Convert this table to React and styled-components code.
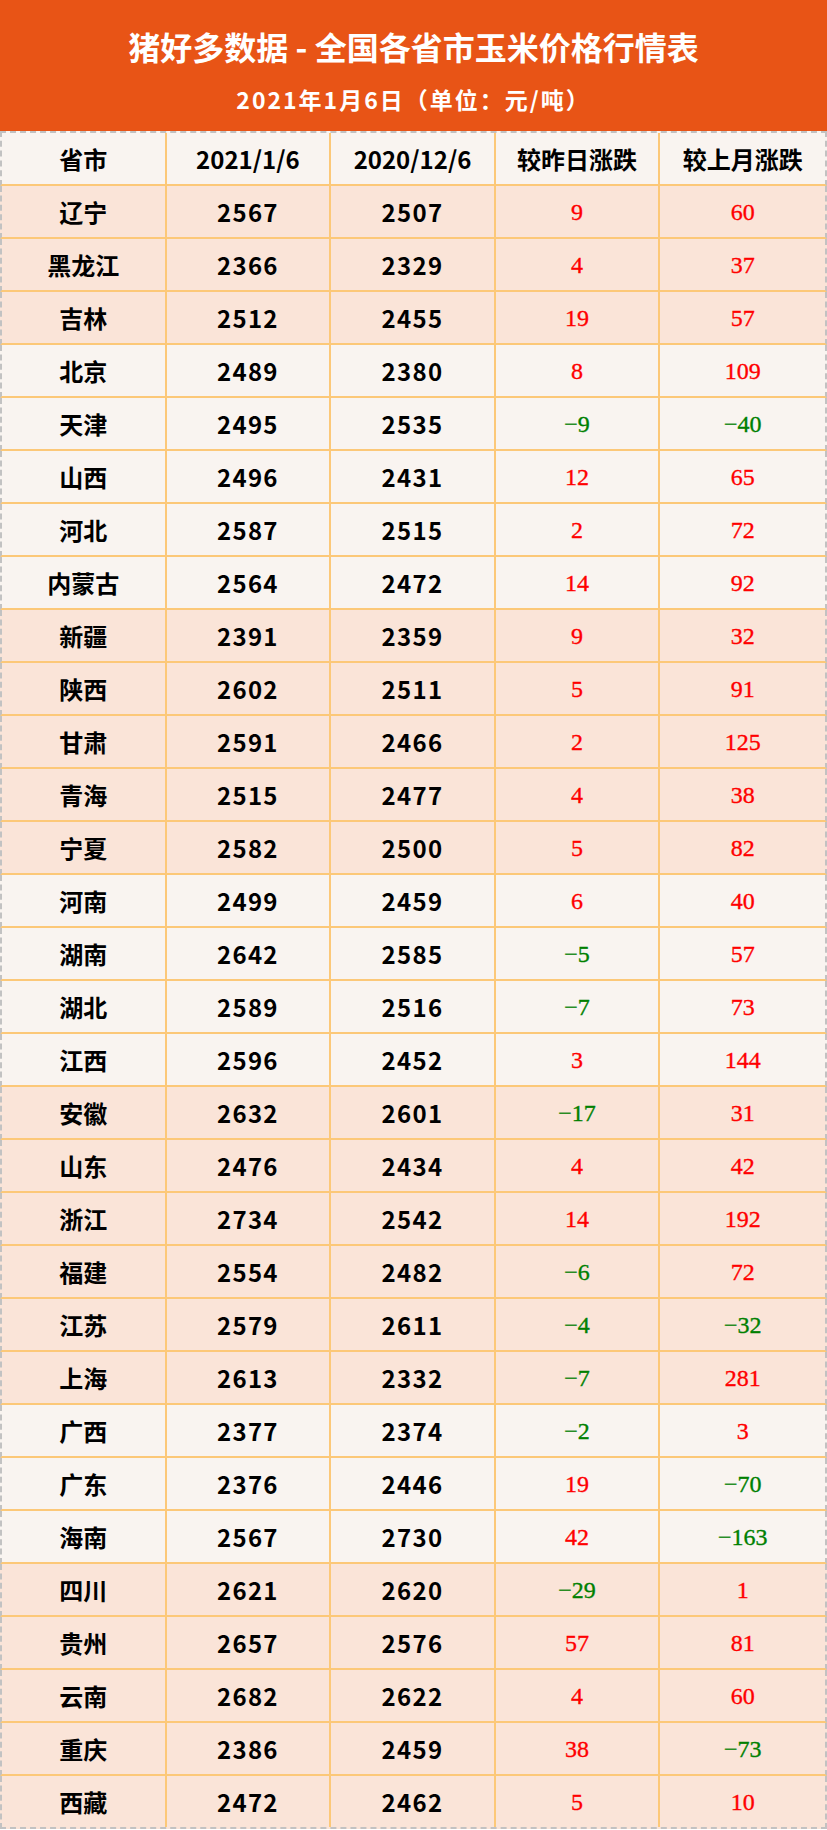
import React from "react";
import styled, { createGlobalStyle } from "styled-components";

const GlobalStyle = createGlobalStyle`
  html, body { margin: 0; padding: 0; background: #ffffff; }
  body { font-family: "Noto Sans CJK SC", "Noto Sans", sans-serif; }
  * { box-sizing: border-box; }
`;

const Page = styled.div`
  width: 827px;
  display: flex;
  flex-direction: column;
`;

const Banner = styled.header`
  height: 131px;
  background: #e85416;
  color: #ffffff;
  display: flex;
  flex-direction: column;
  align-items: center;
  padding-top: 27px;
  gap: 19px;
  font-family: "Noto Sans CJK SC", sans-serif;
  font-weight: 700;
`;

const Title = styled.h1`
  margin: 0;
  font-size: 32px;
  line-height: 38px;
  font-weight: 700;
`;

const Subtitle = styled.div`
  font-size: 23px;
  line-height: 30px;
  letter-spacing: 2px;
`;

const Table = styled.div`
  display: flex;
  flex-direction: column;
`;

const tones = {
  light: "#f9f4f0",
  pink: "#fae4d8",
};

const Row = styled.div`
  display: grid;
  grid-template-columns: repeat(5, 1fr);
  background: ${(p) => tones[p.$tone]};
  border-left: 2px dashed #c2c2c2;
  border-right: 2px dashed #c2c2c2;
  border-top: ${(p) => (p.$first ? "2px dashed #c2c2c2" : "none")};
  border-bottom: ${(p) => (p.$last ? "2px dashed #c2c2c2" : "2px solid #fcc878")};
`;

const Cell = styled.div`
  height: 51px;
  display: flex;
  align-items: center;
  justify-content: center;
  border-right: 2px solid #fcc878;
  &:last-child { border-right: none; }
  font-family: "Noto Sans CJK SC", sans-serif;
  font-weight: 700;
  font-size: 24px;
  color: #000000;
  letter-spacing: ${(p) => (p.$num ? "1.3px" : "0")};
`;

const Change = styled.span`
  font-family: "Liberation Serif", "Times New Roman", serif;
  font-size: 24px;
  font-weight: 400;
  padding-top: 2px;
  color: ${(p) => (p.$down ? "#008000" : "#ff0000")};
  -webkit-text-stroke: 0.35px ${(p) => (p.$down ? "#008000" : "#ff0000")};
`;

const rows = [
  ["辽宁", 2567, 2507, 9, 60, "pink"],
  ["黑龙江", 2366, 2329, 4, 37, "pink"],
  ["吉林", 2512, 2455, 19, 57, "pink"],
  ["北京", 2489, 2380, 8, 109, "light"],
  ["天津", 2495, 2535, -9, -40, "light"],
  ["山西", 2496, 2431, 12, 65, "light"],
  ["河北", 2587, 2515, 2, 72, "light"],
  ["内蒙古", 2564, 2472, 14, 92, "light"],
  ["新疆", 2391, 2359, 9, 32, "pink"],
  ["陕西", 2602, 2511, 5, 91, "pink"],
  ["甘肃", 2591, 2466, 2, 125, "pink"],
  ["青海", 2515, 2477, 4, 38, "pink"],
  ["宁夏", 2582, 2500, 5, 82, "pink"],
  ["河南", 2499, 2459, 6, 40, "light"],
  ["湖南", 2642, 2585, -5, 57, "light"],
  ["湖北", 2589, 2516, -7, 73, "light"],
  ["江西", 2596, 2452, 3, 144, "light"],
  ["安徽", 2632, 2601, -17, 31, "pink"],
  ["山东", 2476, 2434, 4, 42, "pink"],
  ["浙江", 2734, 2542, 14, 192, "pink"],
  ["福建", 2554, 2482, -6, 72, "pink"],
  ["江苏", 2579, 2611, -4, -32, "pink"],
  ["上海", 2613, 2332, -7, 281, "pink"],
  ["广西", 2377, 2374, -2, 3, "light"],
  ["广东", 2376, 2446, 19, -70, "light"],
  ["海南", 2567, 2730, 42, -163, "light"],
  ["四川", 2621, 2620, -29, 1, "pink"],
  ["贵州", 2657, 2576, 57, 81, "pink"],
  ["云南", 2682, 2622, 4, 60, "pink"],
  ["重庆", 2386, 2459, 38, -73, "pink"],
  ["西藏", 2472, 2462, 5, 10, "pink"],
];

const fmt = (n) => (n < 0 ? "\u2212" + Math.abs(n) : String(n));

export default function App() {
  return (
    <Page>
      <GlobalStyle />
      <Banner>
        <Title>猪好多数据 - 全国各省市玉米价格行情表</Title>
        <Subtitle>2021年1月6日（单位：元/吨）</Subtitle>
      </Banner>
      <Table>
        <Row $tone="light" $first>
          <Cell>省市</Cell>
          <Cell>2021/1/6</Cell>
          <Cell>2020/12/6</Cell>
          <Cell>较昨日涨跌</Cell>
          <Cell>较上月涨跌</Cell>
        </Row>
        {rows.map(([name, a, b, d, m, tone], i) => (
          <Row key={name} $tone={tone} $last={i === rows.length - 1}>
            <Cell>{name}</Cell>
            <Cell $num>{a}</Cell>
            <Cell $num>{b}</Cell>
            <Cell>
              <Change $down={d < 0}>{fmt(d)}</Change>
            </Cell>
            <Cell>
              <Change $down={m < 0}>{fmt(m)}</Change>
            </Cell>
          </Row>
        ))}
      </Table>
    </Page>
  );
}
